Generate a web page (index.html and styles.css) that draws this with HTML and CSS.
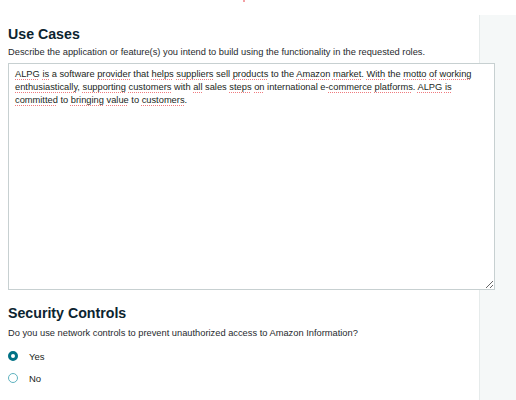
FILE: index.html
```html
<!DOCTYPE html>
<html>
<head>
<meta charset="utf-8">
<link rel="stylesheet" href="styles.css">
</head>
<body>
<div class="side-panel"></div>
<span class="top-mark"></span>
<main class="content">
  <section class="block">
    <h2 class="title">Use Cases</h2>
    <p class="desc">Describe the application or feature(s) you intend to build using the functionality in the requested roles.</p>
    <div class="textbox"><span class="sp">ALPG</span> <span class="sp">is</span> a software <span class="sp">provider</span> that <span class="sp">helps</span> <span class="sp">suppliers</span> sell <span class="sp">products</span> to the <span class="sp">Amazon</span> <span class="sp">market</span>. <span class="sp">With</span> the <span class="sp">motto</span> <span class="sp">of</span> <span class="sp">working</span> <span class="sp">enthusiastically</span>, <span class="sp">supporting</span> <span class="sp">customers</span> with <span class="sp">all</span> sales <span class="sp">steps</span> <span class="sp">on</span> international e-<span class="sp">commerce</span> <span class="sp">platforms</span>. <span class="sp">ALPG</span> <span class="sp">is</span> <span class="sp">committed</span> to <span class="sp">bringing</span> <span class="sp">value</span> to <span class="sp">customers</span>.</div>
  </section>
  <section class="block block-security">
    <h2 class="title">Security Controls</h2>
    <p class="desc">Do you use network controls to prevent unauthorized access to Amazon Information?</p>
    <div class="radios">
      <label class="radio"><span class="dot checked"></span><span class="rlabel">Yes</span></label>
      <label class="radio"><span class="dot"></span><span class="rlabel">No</span></label>
    </div>
  </section>
</main>
</body>
</html>
```

FILE: styles.css
```css
html, body {
  margin: 0;
  padding: 0;
  background: #ffffff;
}
body {
  position: relative;
  width: 516px;
  height: 400px;
  overflow: hidden;
  font-family: "Liberation Sans", Arial, sans-serif;
  color: #0f1111;
}
.side-panel {
  position: absolute;
  left: 479px;
  top: 15px;
  right: 0;
  bottom: 0;
  background: #f5f8f8;
  border-left: 1px solid #e6ebeb;
}
.top-mark {
  position: absolute;
  left: 243px;
  top: 0;
  width: 2px;
  height: 2px;
  background: #f3a0a4;
}
.content {
  position: relative;
  z-index: 1;
  padding: 26px 0 0 8px;
  width: 487px;
}
.block {
  display: flex;
  flex-direction: column;
}
.title {
  margin: 0;
  font-size: 14.2px;
  line-height: 17px;
  font-weight: bold;
  color: #0c2430;
}
.desc {
  margin: 3px 0 0 0;
  font-size: 9.3px;
  line-height: 12px;
  color: #1f2a2e;
}
.textbox {
  margin-top: 5px;
  box-sizing: border-box;
  height: 227px;
  border: 1px solid #c7d0d1;
  background: #ffffff;
  padding: 4px 8px 4px 6px;
  font-size: 9.3px;
  line-height: 13px;
  color: #1a1f22;
  overflow: auto;
  resize: vertical;
}
.sp {
  text-decoration-line: underline;
  text-decoration-style: dotted;
  text-decoration-color: #ef7a7e;
  text-decoration-thickness: 1px;
  text-underline-offset: 2px;
}
.block-security {
  margin-top: 15px;
}
.block-security .desc {
  margin-top: 5px;
}
.radios {
  display: flex;
  flex-direction: column;
  gap: 10px;
  margin-top: 11px;
}
.radio {
  display: flex;
  align-items: center;
  gap: 11px;
  height: 12px;
  font-size: 9.5px;
  color: #1a1f22;
}
.dot {
  box-sizing: border-box;
  width: 10px;
  height: 10px;
  border-radius: 50%;
  border: 1px solid #5fb3c0;
  background: #fff;
}
.dot.checked {
  border: 3px solid #007185;
}
```
